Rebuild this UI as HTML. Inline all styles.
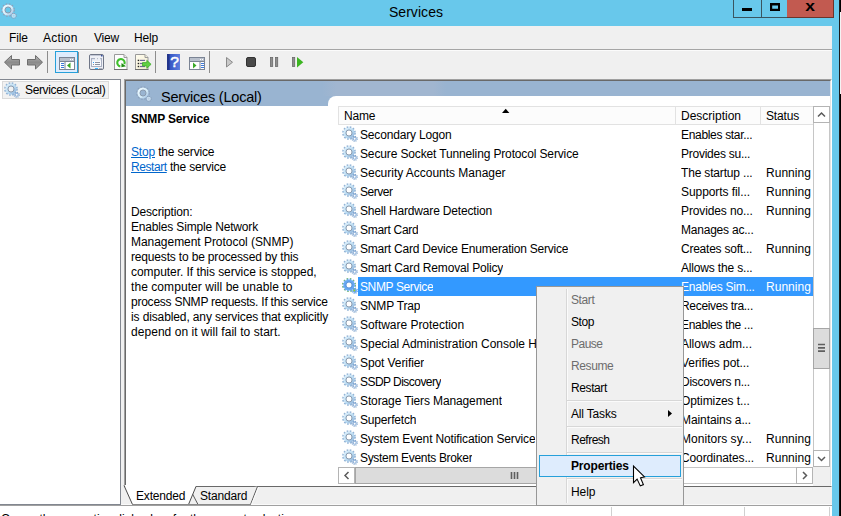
<!DOCTYPE html>
<html lang="en"><head><meta charset="utf-8"><title>Services</title>
<style>
html,body{margin:0;padding:0}
body{width:841px;height:516px;overflow:hidden;position:relative;background:#68c8eb;
 font-family:"Liberation Sans",sans-serif;font-size:12px;color:#000;letter-spacing:-0.17px;line-height:15px}
div,span.c,span.t,svg,i{position:absolute;box-sizing:border-box;white-space:nowrap}
#edge1{left:839px;top:0;width:1px;height:516px;background:#1c1c1c}
#edge2{left:840px;top:0;width:1px;height:516px;background:#000}
#edge2w{left:840px;top:12px;width:1px;height:82px;background:#f4f4f4}
#title .t{left:0;width:832px;top:3px;text-align:center;font-size:14px;line-height:18px;letter-spacing:0.06px}
#capbtns{left:733px;top:0;width:101px;height:18px;border:1px solid #3a5560;border-top:0}
#bmin{left:0;top:0;width:28px;height:17px;border-right:1px solid #3a5560}
#bmax{left:28px;top:0;width:25px;height:17px}
#bclose{left:53px;top:0;width:47px;height:18px;background:#c25a50;border-right:1px solid #6b342c;border-bottom:1px solid #6b342c}
#client{left:0;top:26px;width:832px;height:490px;background:#f0f0f0}
#menubar .t{top:30px;line-height:16px}
#tbline1{left:0;top:49px;width:832px;height:1px;background:#a5a5a5}
#tbline2{left:0;top:50px;width:832px;height:1px;background:#fbfbfb}
.tsep{top:51px;width:1px;height:22px;background:#8d8d8d}
#tbchk{left:55px;top:51px;width:23px;height:22px;border:1px solid #26a0da;background:#deecfd}
#tbchks{left:78px;top:52px;width:1px;height:21px;background:#8e8e8e}
/* left tree pane */
#tree{left:0;top:79px;width:121px;height:426px;background:#fff;border-top:1px solid #828790;border-right:1px solid #828790;border-bottom:1px solid #828790}
#tree2{display:none}
#titem{left:2px;top:81px;width:107px;height:18px;background:#f2f2f2;border:1px solid #dadada}
#titem .t{left:22px;top:0px;line-height:16px}
#titem svg{left:1px;top:0px}
/* right panel */
#panel{left:124px;top:79px;width:708px;height:408px;background:#fff;border:1px solid #a0a0a0;border-right-color:#fff;border-bottom-color:#696969}
#panel2{left:125px;top:80px;width:706px;height:406px;border:1px solid #696969;border-right-color:#e3e3e3;border-bottom-color:#fff}
#band{left:126px;top:81px;width:704px;height:25px;background:#99b4d1}
#bandw{left:328px;top:96px;width:502px;height:12px;background:#fff;border-top-left-radius:8px}
#band .t{left:35px;top:7px;font-size:14.5px;line-height:18px;letter-spacing:-0.2px}
#band svg{left:10px;top:5px}
/* description */
#desc div{left:131px;line-height:15px}
#desc a{color:#0066cc;text-decoration:underline}
/* list */
#hdr{left:338px;top:106px;width:476px;height:19px;background:#fcfcfc;border:1px solid #e2e2e2;border-right:0}
#hdr .t{top:2px;line-height:15px}
#hdr i{top:0;width:1px;height:17px;background:#e2e2e2}
.row{left:338px;width:475px;height:19px}
.row .gear{left:4px;top:1px}
.row .c{top:2px;line-height:16px;overflow:hidden}
.row .n{left:22px}
.row .d{left:343px}
.row .s{left:428px}
.row.sel:before{content:"";position:absolute;left:20px;top:0;width:455px;height:19px;background:#3399ff}
.row.sel .c{color:#fff}
/* scrollbars */
.sb{background:#fff}
.sbtn{background:#fff;border:1px solid #b4b4b4}
.thumb{background:#dcdcdc;border:1px solid #a6a6a6}
/* tabs + status */
#status{left:0;top:505px;width:832px;height:11px;background:#fff;border-top:1px solid #a0a0a0}
#status .t{left:1px;top:6px;line-height:15px;letter-spacing:-0.05px}
#status i{top:1px;width:1px;height:10px;background:#d0d0d0}
/* context menu */
#menu{left:536px;top:286px;width:148px;height:220px;background:#f0f0f0;border:1px solid #979797}
#menu .g{left:29px;top:2px;width:1px;height:214px;background:#d7d7d7}
#menu .g2{left:30px;top:2px;width:1px;height:214px;background:#fbfbfb}
#menu .t{left:34px;line-height:16px;letter-spacing:-0.4px}
#menu .dis{color:#6d6d6d}
#menu .sep{left:30px;width:115px;height:1px;background:#d7d7d7}
#menu .sepw{left:30px;width:115px;height:1px;background:#fbfbfb}
#menu .hot{left:2px;top:168px;width:142px;height:22px;background:#deecfd;border:1px solid #26a0da}

#xg{left:18px;top:-3px;width:10px;text-align:center;font-weight:bold;font-size:15px;line-height:18px;letter-spacing:0;transform:scaleX(1.16);transform-origin:50% 50%}

</style></head>
<body>
<svg width="0" height="0" style="position:absolute"><defs><linearGradient id="gg" x1="0" y1="0" x2="1" y2="1"><stop offset="0" stop-color="#d9eefb"/><stop offset="0.55" stop-color="#bbdcf3"/><stop offset="1" stop-color="#93b8de"/></linearGradient><linearGradient id="gl" x1="0" y1="0" x2="1" y2="1"><stop offset="0" stop-color="#eefaff"/><stop offset="0.6" stop-color="#d5ecf9"/><stop offset="1" stop-color="#a9c6e4"/></linearGradient></defs></svg>
<div id="client"></div>
<div id="edge1"></div><div id="edge2"></div><div id="edge2w"></div>
<div id="title">
<svg style="left:1px;top:3px" width="16" height="16" viewBox="0 0 16 16"><circle cx="7" cy="7" r="6" fill="none" stroke="#8ba1bc" stroke-width="1.700" stroke-dasharray="1.700 1.442"/><circle cx="7" cy="7" r="4.250" fill="none" stroke="url(#gl)" stroke-width="2.700"/><circle cx="7" cy="7" r="3.050" fill="none" stroke="#8999ad" stroke-width="1"/><circle cx="12.700" cy="12.800" r="2.500" fill="none" stroke="#8ba1bc" stroke-width="1.200" stroke-dasharray="1.050 0.913"/><circle cx="12.700" cy="12.800" r="1.500" fill="#fff" fill-opacity="0.35" stroke="#c9def0" stroke-width="1.100"/></svg>
<span class="t">Services</span>
</div>
<div id="capbtns">
<div id="bmin"><svg width="28" height="17" style="left:0;top:0"><rect x="8" y="8" width="10" height="3" fill="#000"/></svg></div>
<div id="bmax"><svg width="25" height="17" style="left:0;top:0"><path d="M8 3h10v8H8z M10.200 5.500v3.300h5.800V5.500z" fill="#000" fill-rule="evenodd"/></svg></div>
<div id="bclose"><span class="t" id="xg">x</span></div>
</div>
<div id="menubar">
<span class="t" style="left:9px">File</span>
<span class="t" style="left:43px;letter-spacing:0.2px">Action</span>
<span class="t" style="left:94px">View</span>
<span class="t" style="left:134px">Help</span>
</div>
<div id="tbline1"></div><div id="tbline2"></div>
<div id="toolbar">
<div id="tbchk"></div><div id="tbchks"></div>
<div class="tsep" style="left:47px"></div>
<div class="tsep" style="left:155px"></div>
<div class="tsep" style="left:209px"></div>
<svg id="tbicons" style="left:0;top:50px" width="320" height="28" viewBox="0 50 320 28">
<!-- back / forward arrows -->
<defs>
<linearGradient id="ga" x1="0" y1="0" x2="0" y2="1"><stop offset="0" stop-color="#b9b9b9"/><stop offset="0.5" stop-color="#8a8a8a"/><stop offset="1" stop-color="#a8a8a8"/></linearGradient>
<linearGradient id="gh" x1="0" y1="0" x2="1" y2="0"><stop offset="0" stop-color="#2a3f9e"/><stop offset="0.25" stop-color="#3656c4"/><stop offset="1" stop-color="#5f7fe0"/></linearGradient>
<linearGradient id="gdoc" x1="0" y1="0" x2="1" y2="1"><stop offset="0" stop-color="#fffdf0"/><stop offset="1" stop-color="#f3ecd0"/></linearGradient>
</defs>
<path d="M4.5 62.2 L11.5 55.5 V59.5 H19.5 V65 H11.5 V69 Z" fill="url(#ga)" stroke="#6e6e6e" stroke-width="1" stroke-linejoin="round"/>
<path d="M42.5 62.2 L35.5 55.5 V59.5 H27.5 V65 H35.5 V69 Z" fill="url(#ga)" stroke="#6e6e6e" stroke-width="1" stroke-linejoin="round"/>
<!-- show/hide console tree -->
<g>
<rect x="59.5" y="57.5" width="15" height="12" fill="#fff" stroke="#7b8494"/>
<rect x="60" y="58" width="14" height="3" fill="#b9c0cc"/>
<rect x="60" y="61" width="14" height="1" fill="#7b8494"/>
<rect x="64.5" y="62" width="1" height="7" fill="#7b8494"/>
<rect x="61" y="63" width="3" height="1" fill="#3b78d8"/><rect x="61" y="65" width="3" height="1" fill="#3b78d8"/><rect x="61" y="67" width="3" height="1" fill="#3b78d8"/>
<path d="M70.5 62.5v6l-3.5-3z" fill="#3aa827"/>
<rect x="70" y="59" width="1" height="1" fill="#fff"/><rect x="72" y="59" width="1" height="1" fill="#fff"/>
</g>
<!-- properties -->
<g>
<rect x="89.500" y="54.500" width="14" height="15" rx="1.500" fill="#eef0f6" stroke="#6f7687"/>
<rect x="90" y="55" width="13" height="1" fill="#c3c8d6"/><rect x="101" y="55" width="1.500" height="1.500" fill="#3a4f9a"/>
<rect x="91.500" y="58.500" width="10" height="8" fill="#f9fafd" stroke="#a9b0c2"/>
<rect x="92" y="59" width="9" height="1.500" fill="#dfe3ee"/><rect x="95" y="58.200" width="2.200" height="1.300" fill="#fff"/><rect x="98" y="58.200" width="2.200" height="1.300" fill="#fff"/>
<rect x="93" y="62" width="1" height="1" fill="#2f9fff"/><rect x="95" y="62" width="5" height="1" fill="#8a90a0"/>
<rect x="93" y="64" width="1" height="1" fill="#8a90a0"/><rect x="95" y="64" width="5" height="1" fill="#8a90a0"/>
<rect x="95" y="68" width="3" height="1" fill="#2fb5ff"/><rect x="99" y="68" width="3" height="1" fill="#b0b5c0"/>
</g>
<!-- refresh -->
<g>
<path d="M114.500 54.500h9.500l3 3v12h-12.500z" fill="#fdfdfd" stroke="#9a9a9a"/>
<path d="M114 69.500h13.500" stroke="#6f6f6f"/>
<path d="M124 54.500v3h3" fill="#ececec" stroke="#9a9a9a"/>
<path d="M124.400 64.100A3.700 3.700 0 1 0 120.300 66.400" fill="none" stroke="#3fbf2b" stroke-width="2.100"/>
<path d="M121.500 63l4.500 3.200-4.600 1.100z" fill="#1f8f12"/>
</g>
<!-- export list -->
<g>
<path d="M135.500 54.500h9.500l3 3v12h-12.500z" fill="url(#gdoc)" stroke="#9a9a9a"/>
<path d="M135 69.500h13.500" stroke="#6f6f6f"/>
<path d="M145 54.500v3h3" fill="#f4f0dc" stroke="#9a9a9a"/>
<rect x="137.700" y="59.700" width="1.500" height="1.400" fill="#222"/><rect x="140" y="59.800" width="5" height="1.200" fill="#6d6a9a"/>
<rect x="137.700" y="62.800" width="1.500" height="1.400" fill="#222"/><rect x="140" y="62.900" width="5" height="1.200" fill="#6d6a9a"/>
<rect x="137.700" y="65.800" width="1.500" height="1.400" fill="#222"/><rect x="140" y="65.900" width="5" height="1.200" fill="#6d6a9a"/>
<path d="M142.500 62.600h4.300v-2.300l4.300 4-4.300 4v-2.300h-4.300z" fill="#62d044" stroke="#35a823" stroke-width="0.700"/>
</g>
<!-- help -->
<g>
<rect x="167" y="54" width="13" height="16" fill="url(#gh)"/>
<rect x="167" y="54" width="2.500" height="16" fill="#22358c"/>
<text x="174.500" y="67.400" font-family="Liberation Sans, sans-serif" font-size="15.500" fill="#fff" stroke="#fff" stroke-width="0.500" text-anchor="middle">?</text>
</g>
<!-- action pane -->
<g>
<rect x="189.500" y="57.500" width="15" height="12" fill="#fff" stroke="#7b8494"/>
<rect x="190" y="58" width="14" height="3" fill="#b9c0cc"/>
<rect x="190" y="61" width="14" height="1" fill="#7b8494"/>
<rect x="199.500" y="62" width="1" height="7" fill="#7b8494"/>
<rect x="201" y="63" width="3" height="1" fill="#3b78d8"/><rect x="201" y="65" width="3" height="1" fill="#3b78d8"/><rect x="201" y="67" width="3" height="1" fill="#3b78d8"/>
<path d="M193 62.500v6l3.500-3z" fill="#3aa827"/>
<rect x="200" y="59" width="1" height="1" fill="#fff"/><rect x="202" y="59" width="1" height="1" fill="#fff"/>
</g>
<!-- play (disabled) -->
<path d="M226.500 57.500v9.500l6-4.750z" fill="#c9c9c9" stroke="#8a8a8a"/>
<!-- stop -->
<rect x="246.500" y="57.500" width="9" height="9" rx="1.500" fill="#4a4a4a" stroke="#333"/>
<!-- pause -->
<rect x="270.500" y="57.500" width="2.200" height="9" fill="#8f8f8f" stroke="#6a6a6a" stroke-width="0.800"/>
<rect x="275.500" y="57.500" width="2.200" height="9" fill="#8f8f8f" stroke="#6a6a6a" stroke-width="0.800"/>
<!-- resume -->
<rect x="292.500" y="57.500" width="2.200" height="9" fill="#8f8f8f" stroke="#6a6a6a" stroke-width="0.800"/>
<path d="M297 57v10.500l6.300-5.250z" fill="#3cb521"/>
</svg>
</div>
<!-- tree pane -->
<div id="tree"></div><div id="tree2"></div>
<div id="titem"><svg width="16" height="16" viewBox="0 0 16 16"><circle cx="7" cy="7" r="6" fill="none" stroke="#8fb1d4" stroke-width="1.700" stroke-dasharray="1.700 1.442"/><circle cx="7" cy="7" r="4.250" fill="none" stroke="url(#gg)" stroke-width="2.700"/><circle cx="7" cy="7" r="3.050" fill="none" stroke="#8999ad" stroke-width="1"/><circle cx="12.700" cy="12.800" r="2.500" fill="none" stroke="#84a6cd" stroke-width="1.200" stroke-dasharray="1.050 0.913"/><circle cx="12.700" cy="12.800" r="1.500" fill="#fff" fill-opacity="0.75" stroke="#8fb2da" stroke-width="1.100"/></svg><span class="t" style="letter-spacing:-0.36px">Services (Local)</span></div>
<!-- right panel -->
<div id="panel"></div><div id="panel2"></div>
<div id="band"><svg width="16" height="16" viewBox="0 0 16 16"><circle cx="7" cy="7" r="6" fill="none" stroke="#8ba1bc" stroke-width="1.700" stroke-dasharray="1.700 1.442"/><circle cx="7" cy="7" r="4.250" fill="none" stroke="url(#gl)" stroke-width="2.700"/><circle cx="7" cy="7" r="3.050" fill="none" stroke="#8999ad" stroke-width="1"/><circle cx="12.700" cy="12.800" r="2.500" fill="none" stroke="#8ba1bc" stroke-width="1.200" stroke-dasharray="1.050 0.913"/><circle cx="12.700" cy="12.800" r="1.500" fill="#fff" fill-opacity="0.35" stroke="#c9def0" stroke-width="1.100"/></svg><span class="t">Services (Local)</span></div>
<div style="left:322px;top:81px;width:124px;height:15px;background:linear-gradient(90deg,#99b4d1,#a1b6d0 12%,#a1b6d0 90%,#99b4d1)"></div>
<div id="bandw"></div>
<div id="desc">
<div style="top:112px;font-weight:bold">SNMP Service</div>
<div style="top:145px"><a>Stop</a> the service</div>
<div style="top:160px"><a style="letter-spacing:-0.42px">Restart</a> the service</div>
<div style="top:205px">Description:</div>
<div style="top:220px">Enables Simple Network</div>
<div style="top:235px;letter-spacing:-0.04px">Management Protocol (SNMP)</div>
<div style="top:250px">requests to be processed by this</div>
<div style="top:265px;letter-spacing:-0.05px">computer. If this service is stopped,</div>
<div style="top:280px;letter-spacing:0.07px">the computer will be unable to</div>
<div style="top:295px;letter-spacing:-0.24px">process SNMP requests. If this service</div>
<div style="top:310px;letter-spacing:-0.12px">is disabled, any services that explicitly</div>
<div style="top:325px;letter-spacing:0.05px">depend on it will fail to start.</div>
</div>
<div id="hdr">
<span class="t" style="left:5px">Name</span>
<svg style="left:163px;top:1px" width="9" height="6"><path d="M0 5L3.700 0.800L7.400 5z" fill="#000"/></svg>
<i style="left:336px"></i>
<span class="t" style="left:342px;letter-spacing:0">Description</span>
<i style="left:421px"></i>
<span class="t" style="left:427px">Status</span>
</div>
<div id="list">
<div class="row" style="top:125px"><svg class="gear" width="16" height="16" viewBox="0 0 16 16"><circle cx="7" cy="7" r="6" fill="none" stroke="#8fb1d4" stroke-width="1.700" stroke-dasharray="1.700 1.442"/><circle cx="7" cy="7" r="4.250" fill="none" stroke="url(#gg)" stroke-width="2.700"/><circle cx="7" cy="7" r="3.050" fill="none" stroke="#8999ad" stroke-width="1"/><circle cx="12.700" cy="12.800" r="2.500" fill="none" stroke="#84a6cd" stroke-width="1.200" stroke-dasharray="1.050 0.913"/><circle cx="12.700" cy="12.800" r="1.500" fill="#fff" fill-opacity="0.75" stroke="#8fb2da" stroke-width="1.100"/></svg><span class="c n">Secondary Logon</span><span class="c d" style="letter-spacing:-0.32px">Enables star...</span><span class="c s"></span></div>
<div class="row" style="top:144px"><svg class="gear" width="16" height="16" viewBox="0 0 16 16"><circle cx="7" cy="7" r="6" fill="none" stroke="#8fb1d4" stroke-width="1.700" stroke-dasharray="1.700 1.442"/><circle cx="7" cy="7" r="4.250" fill="none" stroke="url(#gg)" stroke-width="2.700"/><circle cx="7" cy="7" r="3.050" fill="none" stroke="#8999ad" stroke-width="1"/><circle cx="12.700" cy="12.800" r="2.500" fill="none" stroke="#84a6cd" stroke-width="1.200" stroke-dasharray="1.050 0.913"/><circle cx="12.700" cy="12.800" r="1.500" fill="#fff" fill-opacity="0.75" stroke="#8fb2da" stroke-width="1.100"/></svg><span class="c n" style="letter-spacing:-0.14px">Secure Socket Tunneling Protocol Service</span><span class="c d" style="letter-spacing:-0.25px">Provides su...</span><span class="c s"></span></div>
<div class="row" style="top:163px"><svg class="gear" width="16" height="16" viewBox="0 0 16 16"><circle cx="7" cy="7" r="6" fill="none" stroke="#8fb1d4" stroke-width="1.700" stroke-dasharray="1.700 1.442"/><circle cx="7" cy="7" r="4.250" fill="none" stroke="url(#gg)" stroke-width="2.700"/><circle cx="7" cy="7" r="3.050" fill="none" stroke="#8999ad" stroke-width="1"/><circle cx="12.700" cy="12.800" r="2.500" fill="none" stroke="#84a6cd" stroke-width="1.200" stroke-dasharray="1.050 0.913"/><circle cx="12.700" cy="12.800" r="1.500" fill="#fff" fill-opacity="0.75" stroke="#8fb2da" stroke-width="1.100"/></svg><span class="c n" style="letter-spacing:-0.02px">Security Accounts Manager</span><span class="c d">The startup ...</span><span class="c s" style="letter-spacing:0.03px">Running</span></div>
<div class="row" style="top:182px"><svg class="gear" width="16" height="16" viewBox="0 0 16 16"><circle cx="7" cy="7" r="6" fill="none" stroke="#8fb1d4" stroke-width="1.700" stroke-dasharray="1.700 1.442"/><circle cx="7" cy="7" r="4.250" fill="none" stroke="url(#gg)" stroke-width="2.700"/><circle cx="7" cy="7" r="3.050" fill="none" stroke="#8999ad" stroke-width="1"/><circle cx="12.700" cy="12.800" r="2.500" fill="none" stroke="#84a6cd" stroke-width="1.200" stroke-dasharray="1.050 0.913"/><circle cx="12.700" cy="12.800" r="1.500" fill="#fff" fill-opacity="0.75" stroke="#8fb2da" stroke-width="1.100"/></svg><span class="c n" style="letter-spacing:-0.47px">Server</span><span class="c d" style="letter-spacing:-0.07px">Supports fil...</span><span class="c s" style="letter-spacing:0.03px">Running</span></div>
<div class="row" style="top:201px"><svg class="gear" width="16" height="16" viewBox="0 0 16 16"><circle cx="7" cy="7" r="6" fill="none" stroke="#8fb1d4" stroke-width="1.700" stroke-dasharray="1.700 1.442"/><circle cx="7" cy="7" r="4.250" fill="none" stroke="url(#gg)" stroke-width="2.700"/><circle cx="7" cy="7" r="3.050" fill="none" stroke="#8999ad" stroke-width="1"/><circle cx="12.700" cy="12.800" r="2.500" fill="none" stroke="#84a6cd" stroke-width="1.200" stroke-dasharray="1.050 0.913"/><circle cx="12.700" cy="12.800" r="1.500" fill="#fff" fill-opacity="0.75" stroke="#8fb2da" stroke-width="1.100"/></svg><span class="c n">Shell Hardware Detection</span><span class="c d" style="letter-spacing:-0.12px">Provides no...</span><span class="c s" style="letter-spacing:0.03px">Running</span></div>
<div class="row" style="top:220px"><svg class="gear" width="16" height="16" viewBox="0 0 16 16"><circle cx="7" cy="7" r="6" fill="none" stroke="#8fb1d4" stroke-width="1.700" stroke-dasharray="1.700 1.442"/><circle cx="7" cy="7" r="4.250" fill="none" stroke="url(#gg)" stroke-width="2.700"/><circle cx="7" cy="7" r="3.050" fill="none" stroke="#8999ad" stroke-width="1"/><circle cx="12.700" cy="12.800" r="2.500" fill="none" stroke="#84a6cd" stroke-width="1.200" stroke-dasharray="1.050 0.913"/><circle cx="12.700" cy="12.800" r="1.500" fill="#fff" fill-opacity="0.75" stroke="#8fb2da" stroke-width="1.100"/></svg><span class="c n" style="letter-spacing:-0.29px">Smart Card</span><span class="c d" style="letter-spacing:-0.22px">Manages ac...</span><span class="c s"></span></div>
<div class="row" style="top:239px"><svg class="gear" width="16" height="16" viewBox="0 0 16 16"><circle cx="7" cy="7" r="6" fill="none" stroke="#8fb1d4" stroke-width="1.700" stroke-dasharray="1.700 1.442"/><circle cx="7" cy="7" r="4.250" fill="none" stroke="url(#gg)" stroke-width="2.700"/><circle cx="7" cy="7" r="3.050" fill="none" stroke="#8999ad" stroke-width="1"/><circle cx="12.700" cy="12.800" r="2.500" fill="none" stroke="#84a6cd" stroke-width="1.200" stroke-dasharray="1.050 0.913"/><circle cx="12.700" cy="12.800" r="1.500" fill="#fff" fill-opacity="0.75" stroke="#8fb2da" stroke-width="1.100"/></svg><span class="c n" style="letter-spacing:-0.21px">Smart Card Device Enumeration Service</span><span class="c d" style="letter-spacing:-0.24px">Creates soft...</span><span class="c s" style="letter-spacing:0.03px">Running</span></div>
<div class="row" style="top:258px"><svg class="gear" width="16" height="16" viewBox="0 0 16 16"><circle cx="7" cy="7" r="6" fill="none" stroke="#8fb1d4" stroke-width="1.700" stroke-dasharray="1.700 1.442"/><circle cx="7" cy="7" r="4.250" fill="none" stroke="url(#gg)" stroke-width="2.700"/><circle cx="7" cy="7" r="3.050" fill="none" stroke="#8999ad" stroke-width="1"/><circle cx="12.700" cy="12.800" r="2.500" fill="none" stroke="#84a6cd" stroke-width="1.200" stroke-dasharray="1.050 0.913"/><circle cx="12.700" cy="12.800" r="1.500" fill="#fff" fill-opacity="0.75" stroke="#8fb2da" stroke-width="1.100"/></svg><span class="c n">Smart Card Removal Policy</span><span class="c d">Allows the s...</span><span class="c s"></span></div>
<div class="row sel" style="top:277px"><svg class="gear" width="16" height="16" viewBox="0 0 16 16"><circle cx="7" cy="7" r="6.100" fill="none" stroke="#62a4ee" stroke-width="1.700" stroke-dasharray="1.750 1.444"/><circle cx="7" cy="7" r="6.550" fill="none" stroke="#8fd018" stroke-width="0.900" stroke-dasharray="1.100 2.330" stroke-dashoffset="-0.300"/><circle cx="7" cy="7" r="4.300" fill="none" stroke="#66a9f3" stroke-width="2.600"/><circle cx="7" cy="7" r="3.050" fill="none" stroke="#5a93d8" stroke-width="1.100"/><circle cx="12.700" cy="12.700" r="2.600" fill="none" stroke="#5f9fe8" stroke-width="1.300" stroke-dasharray="1.100 0.942"/><circle cx="12.700" cy="12.700" r="1.700" fill="#6aaaf0" stroke="#5f9fe8" stroke-width="0.900"/><circle cx="12.300" cy="12.500" r="0.900" fill="#9ad820"/></svg><span class="c n" style="letter-spacing:-0.38px">SNMP Service</span><span class="c d" style="letter-spacing:-0.27px">Enables Sim...</span><span class="c s" style="letter-spacing:0.03px">Running</span></div>
<div class="row" style="top:296px"><svg class="gear" width="16" height="16" viewBox="0 0 16 16"><circle cx="7" cy="7" r="6" fill="none" stroke="#8fb1d4" stroke-width="1.700" stroke-dasharray="1.700 1.442"/><circle cx="7" cy="7" r="4.250" fill="none" stroke="url(#gg)" stroke-width="2.700"/><circle cx="7" cy="7" r="3.050" fill="none" stroke="#8999ad" stroke-width="1"/><circle cx="12.700" cy="12.800" r="2.500" fill="none" stroke="#84a6cd" stroke-width="1.200" stroke-dasharray="1.050 0.913"/><circle cx="12.700" cy="12.800" r="1.500" fill="#fff" fill-opacity="0.75" stroke="#8fb2da" stroke-width="1.100"/></svg><span class="c n">SNMP Trap</span><span class="c d" style="letter-spacing:-0.32px">Receives tra...</span><span class="c s"></span></div>
<div class="row" style="top:315px"><svg class="gear" width="16" height="16" viewBox="0 0 16 16"><circle cx="7" cy="7" r="6" fill="none" stroke="#8fb1d4" stroke-width="1.700" stroke-dasharray="1.700 1.442"/><circle cx="7" cy="7" r="4.250" fill="none" stroke="url(#gg)" stroke-width="2.700"/><circle cx="7" cy="7" r="3.050" fill="none" stroke="#8999ad" stroke-width="1"/><circle cx="12.700" cy="12.800" r="2.500" fill="none" stroke="#84a6cd" stroke-width="1.200" stroke-dasharray="1.050 0.913"/><circle cx="12.700" cy="12.800" r="1.500" fill="#fff" fill-opacity="0.75" stroke="#8fb2da" stroke-width="1.100"/></svg><span class="c n" style="letter-spacing:-0.03px">Software Protection</span><span class="c d" style="letter-spacing:-0.32px">Enables the ...</span><span class="c s"></span></div>
<div class="row" style="top:334px"><svg class="gear" width="16" height="16" viewBox="0 0 16 16"><circle cx="7" cy="7" r="6" fill="none" stroke="#8fb1d4" stroke-width="1.700" stroke-dasharray="1.700 1.442"/><circle cx="7" cy="7" r="4.250" fill="none" stroke="url(#gg)" stroke-width="2.700"/><circle cx="7" cy="7" r="3.050" fill="none" stroke="#8999ad" stroke-width="1"/><circle cx="12.700" cy="12.800" r="2.500" fill="none" stroke="#84a6cd" stroke-width="1.200" stroke-dasharray="1.050 0.913"/><circle cx="12.700" cy="12.800" r="1.500" fill="#fff" fill-opacity="0.75" stroke="#8fb2da" stroke-width="1.100"/></svg><span class="c n" style="letter-spacing:-0.015px">Special Administration Console Helper</span><span class="c d" style="letter-spacing:-0.03px">Allows adm...</span><span class="c s"></span></div>
<div class="row" style="top:353px"><svg class="gear" width="16" height="16" viewBox="0 0 16 16"><circle cx="7" cy="7" r="6" fill="none" stroke="#8fb1d4" stroke-width="1.700" stroke-dasharray="1.700 1.442"/><circle cx="7" cy="7" r="4.250" fill="none" stroke="url(#gg)" stroke-width="2.700"/><circle cx="7" cy="7" r="3.050" fill="none" stroke="#8999ad" stroke-width="1"/><circle cx="12.700" cy="12.800" r="2.500" fill="none" stroke="#84a6cd" stroke-width="1.200" stroke-dasharray="1.050 0.913"/><circle cx="12.700" cy="12.800" r="1.500" fill="#fff" fill-opacity="0.75" stroke="#8fb2da" stroke-width="1.100"/></svg><span class="c n" style="letter-spacing:-0.085px">Spot Verifier</span><span class="c d" style="letter-spacing:-0.07px">Verifies pot...</span><span class="c s"></span></div>
<div class="row" style="top:372px"><svg class="gear" width="16" height="16" viewBox="0 0 16 16"><circle cx="7" cy="7" r="6" fill="none" stroke="#8fb1d4" stroke-width="1.700" stroke-dasharray="1.700 1.442"/><circle cx="7" cy="7" r="4.250" fill="none" stroke="url(#gg)" stroke-width="2.700"/><circle cx="7" cy="7" r="3.050" fill="none" stroke="#8999ad" stroke-width="1"/><circle cx="12.700" cy="12.800" r="2.500" fill="none" stroke="#84a6cd" stroke-width="1.200" stroke-dasharray="1.050 0.913"/><circle cx="12.700" cy="12.800" r="1.500" fill="#fff" fill-opacity="0.75" stroke="#8fb2da" stroke-width="1.100"/></svg><span class="c n" style="letter-spacing:-0.54px">SSDP Discovery</span><span class="c d" style="letter-spacing:-0.27px">Discovers n...</span><span class="c s"></span></div>
<div class="row" style="top:391px"><svg class="gear" width="16" height="16" viewBox="0 0 16 16"><circle cx="7" cy="7" r="6" fill="none" stroke="#8fb1d4" stroke-width="1.700" stroke-dasharray="1.700 1.442"/><circle cx="7" cy="7" r="4.250" fill="none" stroke="url(#gg)" stroke-width="2.700"/><circle cx="7" cy="7" r="3.050" fill="none" stroke="#8999ad" stroke-width="1"/><circle cx="12.700" cy="12.800" r="2.500" fill="none" stroke="#84a6cd" stroke-width="1.200" stroke-dasharray="1.050 0.913"/><circle cx="12.700" cy="12.800" r="1.500" fill="#fff" fill-opacity="0.75" stroke="#8fb2da" stroke-width="1.100"/></svg><span class="c n" style="letter-spacing:-0.12px">Storage Tiers Management</span><span class="c d" style="letter-spacing:-0.09px">Optimizes t...</span><span class="c s"></span></div>
<div class="row" style="top:410px"><svg class="gear" width="16" height="16" viewBox="0 0 16 16"><circle cx="7" cy="7" r="6" fill="none" stroke="#8fb1d4" stroke-width="1.700" stroke-dasharray="1.700 1.442"/><circle cx="7" cy="7" r="4.250" fill="none" stroke="url(#gg)" stroke-width="2.700"/><circle cx="7" cy="7" r="3.050" fill="none" stroke="#8999ad" stroke-width="1"/><circle cx="12.700" cy="12.800" r="2.500" fill="none" stroke="#84a6cd" stroke-width="1.200" stroke-dasharray="1.050 0.913"/><circle cx="12.700" cy="12.800" r="1.500" fill="#fff" fill-opacity="0.75" stroke="#8fb2da" stroke-width="1.100"/></svg><span class="c n">Superfetch</span><span class="c d" style="letter-spacing:-0.09px">Maintains a...</span><span class="c s"></span></div>
<div class="row" style="top:429px"><svg class="gear" width="16" height="16" viewBox="0 0 16 16"><circle cx="7" cy="7" r="6" fill="none" stroke="#8fb1d4" stroke-width="1.700" stroke-dasharray="1.700 1.442"/><circle cx="7" cy="7" r="4.250" fill="none" stroke="url(#gg)" stroke-width="2.700"/><circle cx="7" cy="7" r="3.050" fill="none" stroke="#8999ad" stroke-width="1"/><circle cx="12.700" cy="12.800" r="2.500" fill="none" stroke="#84a6cd" stroke-width="1.200" stroke-dasharray="1.050 0.913"/><circle cx="12.700" cy="12.800" r="1.500" fill="#fff" fill-opacity="0.75" stroke="#8fb2da" stroke-width="1.100"/></svg><span class="c n" style="letter-spacing:-0.14px">System Event Notification Service</span><span class="c d" style="letter-spacing:0.03px">Monitors sy...</span><span class="c s" style="letter-spacing:0.03px">Running</span></div>
<div class="row" style="top:448px"><svg class="gear" width="16" height="16" viewBox="0 0 16 16"><circle cx="7" cy="7" r="6" fill="none" stroke="#8fb1d4" stroke-width="1.700" stroke-dasharray="1.700 1.442"/><circle cx="7" cy="7" r="4.250" fill="none" stroke="url(#gg)" stroke-width="2.700"/><circle cx="7" cy="7" r="3.050" fill="none" stroke="#8999ad" stroke-width="1"/><circle cx="12.700" cy="12.800" r="2.500" fill="none" stroke="#84a6cd" stroke-width="1.200" stroke-dasharray="1.050 0.913"/><circle cx="12.700" cy="12.800" r="1.500" fill="#fff" fill-opacity="0.75" stroke="#8fb2da" stroke-width="1.100"/></svg><span class="c n" style="letter-spacing:-0.32px">System Events Broker</span><span class="c d" style="letter-spacing:-0.12px">Coordinates...</span><span class="c s" style="letter-spacing:0.03px">Running</span></div>
</div>
<!-- vertical scrollbar -->
<div class="sb" style="left:813px;top:106px;width:17px;height:361px;border-left:1px solid #c6c6c6;border-right:1px solid #c6c6c6"></div>
<div class="sbtn" style="left:813px;top:106px;width:17px;height:17px"><svg width="15" height="15" style="left:0;top:0"><path d="M4 9.500L7.500 6L11 9.500" fill="none" stroke="#5a5a5a" stroke-width="1.500"/></svg></div>
<div class="sbtn" style="left:813px;top:450px;width:17px;height:17px"><svg width="15" height="15" style="left:0;top:0"><path d="M4 6L7.500 9.500L11 6" fill="none" stroke="#5a5a5a" stroke-width="1.500"/></svg></div>
<div class="thumb" style="left:813px;top:328px;width:17px;height:41px"><svg width="15" height="39" style="left:0;top:0"><path d="M4 15.500h7M4 18.800h7M4 22.200h7" stroke="#5f5f5f" stroke-width="1.700"/></svg></div>
<!-- horizontal scrollbar -->
<div class="sb" style="left:338px;top:467px;width:475px;height:17px;border-top:1px solid #c6c6c6;border-bottom:1px solid #c6c6c6"></div>
<div class="sbtn" style="left:338px;top:467px;width:17px;height:17px"><svg width="15" height="15" style="left:0;top:0"><path d="M9.500 4L6 7.500L9.500 11" fill="none" stroke="#5a5a5a" stroke-width="1.500"/></svg></div>
<div class="sbtn" style="left:796px;top:467px;width:17px;height:17px"><svg width="15" height="15" style="left:0;top:0"><path d="M6 4L9.500 7.500L6 11" fill="none" stroke="#5a5a5a" stroke-width="1.500"/></svg></div>
<div class="thumb" style="left:355px;top:467px;width:319px;height:17px"><svg width="317" height="15" style="left:0;top:0"><path d="M155.500 4v7M158.500 4v7M161.500 4v7" stroke="#5f5f5f" stroke-width="1.600"/></svg></div>
<div style="left:813px;top:467px;width:17px;height:19px;background:#f0f0f0"></div>
<!-- tabs -->
<div style="left:121px;top:504px;width:711px;height:1px;background:#fafafa"></div>
<svg style="left:120px;top:484px" width="150" height="22" viewBox="120 484 150 22">
<path d="M192.500 494 L198 504.500 H250.500 L257.500 486.500" fill="#f0f0f0" stroke="#5a5a5a"/>
<path d="M251.700 504 L258.700 487" fill="none" stroke="#fbfbfb"/>
<path d="M124.500 485 L132.500 504.500 H188.500 L196 486 V485 Z" fill="#fff"/>
<path d="M124 485.500 L132.500 504.500 M188.500 504.500 L196 486.500" fill="none" stroke="#4d4d4d"/>
<path d="M132 504.500 H251" stroke="#8a8a8a"/>
</svg>
<span class="t" style="left:136px;top:488px;line-height:16px">Extended</span>
<span class="t" style="left:200px;top:488px;line-height:16px">Standard</span>
<!-- status -->
<div id="status"><span class="t">Opens the properties dialog box for the current selection.</span><i style="left:611px"></i><i style="left:744px"></i><i style="left:829px"></i></div>
<!-- context menu -->
<div id="menu">
<div class="g"></div><div class="g2"></div>
<div class="hot"></div>
<span class="t dis" style="top:5px">Start</span>
<span class="t" style="top:27px">Stop</span>
<span class="t dis" style="top:49px;letter-spacing:-0.52px">Pause</span>
<span class="t dis" style="top:71px">Resume</span>
<span class="t" style="top:93px">Restart</span>
<div class="sep" style="top:113px"></div><div class="sepw" style="top:114px"></div>
<span class="t" style="top:119px;letter-spacing:-0.17px">All Tasks</span>
<svg style="left:131px;top:123px" width="5" height="8"><path d="M0 0L4 3.500L0 7z" fill="#000"/></svg>
<div class="sep" style="top:139px"></div><div class="sepw" style="top:140px"></div>
<span class="t" style="top:145px;letter-spacing:-0.5px">Refresh</span>
<div class="sep" style="top:165px"></div><div class="sepw" style="top:166px"></div>
<span class="t" style="top:171px;font-weight:bold;letter-spacing:-0.17px">Properties</span>
<div class="sep" style="top:191px"></div><div class="sepw" style="top:192px"></div>
<span class="t" style="top:197px;letter-spacing:-0.1px">Help</span>
</div>
<!-- mouse cursor -->
<svg style="left:632px;top:464px" width="16" height="24" viewBox="0 0 16 24"><path d="M1.500 2V18.600L5.100 15.100L8.300 21.900L11.400 20.600L8.500 13.800L12.500 12.900Z" fill="#fff" stroke="#000" stroke-width="1.100" stroke-linejoin="miter"/></svg>
</body></html>
